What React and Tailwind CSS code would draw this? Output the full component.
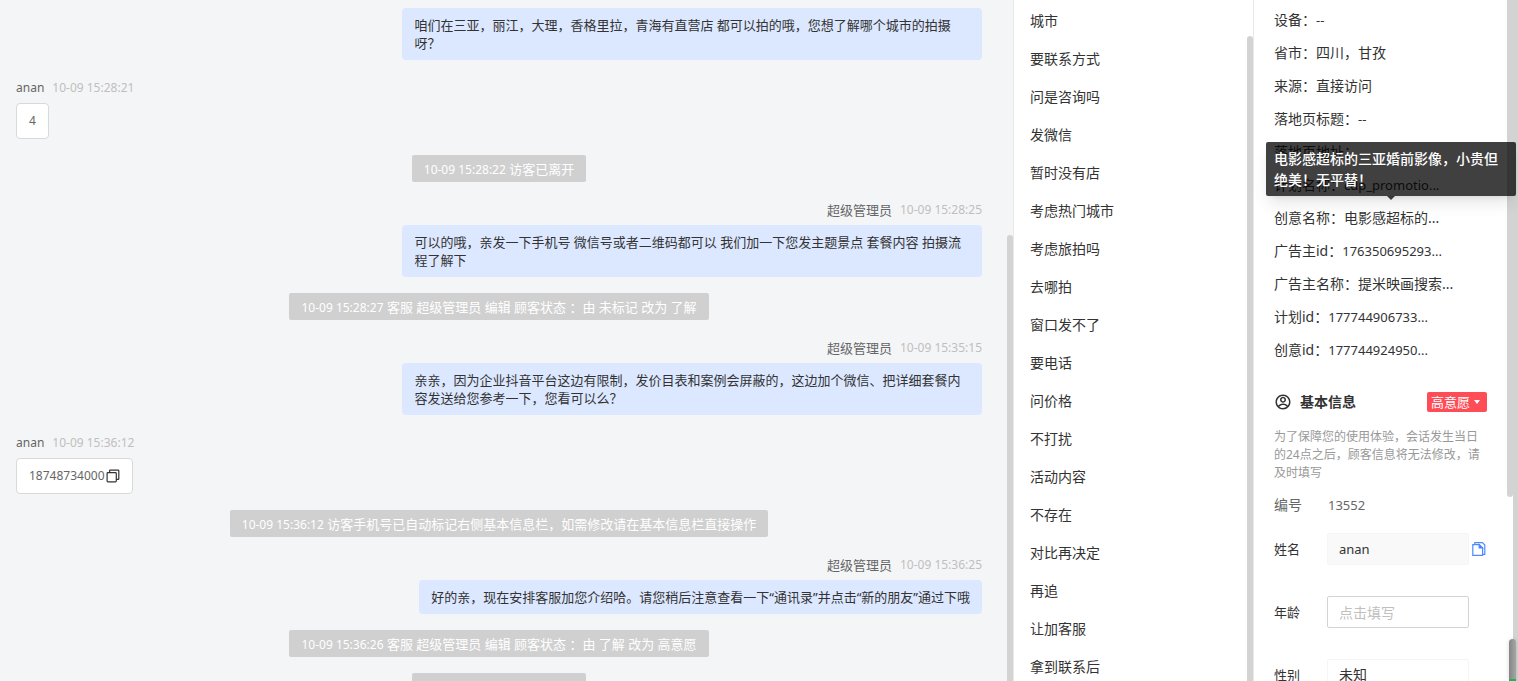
import React from 'react';
import { RiAccountCircleLine } from 'react-icons/ri';

const messages = [
  { type: 'agent', text: '咱们在三亚，丽江，大理，香格里拉，青海有直营店 都可以拍的哦，您想了解哪个城市的拍摄呀？' },
  { type: 'visitor', name: 'anan', time: '10-09 15:28:21', text: '4' },
  { type: 'notice', time: '10-09 15:28:22', text: '访客已离开' },
  { type: 'agent', name: '超级管理员', time: '10-09 15:28:25', text: '可以的哦，亲发一下手机号 微信号或者二维码都可以 我们加一下您发主题景点 套餐内容 拍摄流程了解下' },
  { type: 'notice', time: '10-09 15:28:27', text: '客服 超级管理员 编辑 顾客状态 ：由 未标记 改为 了解' },
  { type: 'agent', name: '超级管理员', time: '10-09 15:35:15', text: '亲亲，因为企业抖音平台这边有限制，发价目表和案例会屏蔽的，这边加个微信、把详细套餐内容发送给您参考一下，您看可以么？' },
  { type: 'visitor', name: 'anan', time: '10-09 15:36:12', text: '18748734000', copy: true },
  { type: 'notice', time: '10-09 15:36:12', text: '访客手机号已自动标记右侧基本信息栏，如需修改请在基本信息栏直接操作' },
  { type: 'agent', name: '超级管理员', time: '10-09 15:36:25', text: '好的亲，现在安排客服加您介绍哈。请您稍后注意查看一下“通讯录”并点击“新的朋友”通过下哦' },
  { type: 'notice', time: '10-09 15:36:26', text: '客服 超级管理员 编辑 顾客状态 ：由 了解 改为 高意愿' },
  { type: 'notice', time: '10-09 15:36:40', text: '访客已离开' },
];

const quickReplies = [
  '城市', '要联系方式', '问是咨询吗', '发微信', '暂时没有店', '考虑热门城市',
  '考虑旅拍吗', '去哪拍', '窗口发不了', '要电话', '问价格', '不打扰',
  '活动内容', '不存在', '对比再决定', '再追', '让加客服', '拿到联系后',
];

const details = [
  { label: '设备', value: '--' },
  { label: '省市', value: '四川，甘孜', cjk: true },
  { label: '来源', value: '直接访问', cjk: true },
  { label: '落地页标题', value: '--' },
  { label: '落地页地址', value: '' },
  { label: '计划名称', value: 'cdp_promotio...' },
  { label: '创意名称', value: '电影感超标的...', cjk: true, tip: '电影感超标的三亚婚前影像，小贵但绝美！无平替！' },
  { label: '广告主id', value: '176350695293...' },
  { label: '广告主名称', value: '提米映画搜索...', cjk: true },
  { label: '计划id', value: '177744906733...' },
  { label: '创意id', value: '177744924950...' },
];

const CopyIcon = () => (
  <svg className="h-[14px] w-[14px]" viewBox="0 0 14 14" fill="none" stroke="#333" strokeWidth="1.2">
    <rect x="1.1" y="3.6" width="9.2" height="9.2" rx="0.8" />
    <path d="M3.6 3.6V1.8a.6.6 0 0 1 .6-.6h8a.6.6 0 0 1 .6.6v8a.6.6 0 0 1-.6.6h-1.9" />
  </svg>
);

const FileCopyIcon = () => (
  <svg className="h-[14px] w-[14px]" viewBox="0 0 14 14" fill="none" stroke="#4d8bff" strokeWidth="1.2">
    <path d="M.8 2.6h6.4l3.4 3.4v7.4H.8z" />
    <path d="M2.8 2.6V.7h7.6l2.4 2.4v9.2h-2.2" />
    <path d="M7.2 2.6v3.4h3.4z" fill="#2f6bff" />
  </svg>
);

const Message = ({ msg }) => {
  if (msg.type === 'notice') {
    return (
      <div className="self-center rounded-xs bg-[#d0d0d0] px-3 pt-[5px] pb-[3px] leading-[19px] text-white">
        <time className="text-xs leading-[19px]">{msg.time}</time> {msg.text}
      </div>
    );
  }

  const isAgent = msg.type === 'agent';
  return (
    <div className={isAgent ? 'flex flex-col items-end' : 'flex flex-col items-start'}>
      {msg.name && (
        <div className="mb-[3px] flex items-center gap-2 leading-6 text-[#666]">
          <span className={isAgent ? 'leading-[22px]' : 'text-xs leading-6'}>{msg.name}</span>
          <time className="text-xs leading-6 text-[#bfbfbf]">{msg.time}</time>
        </div>
      )}
      {isAgent ? (
        <p className="max-w-[60%] rounded bg-[#dce8ff] px-3 py-2 leading-[18px] text-[#333]">{msg.text}</p>
      ) : (
        <div className="flex items-center rounded border border-[#d9d9d9] bg-white px-3 py-2 text-xs leading-[18px] text-[#666]">
          {msg.text}
          {msg.copy && (
            <button type="button" aria-label="复制" className="ml-px">
              <CopyIcon />
            </button>
          )}
        </div>
      )}
    </div>
  );
};

const Detail = ({ item }) => (
  <li className="relative h-[33px] leading-[33px]">
    {item.label}：<span className={item.cjk ? '' : 'text-[13px]'}>{item.value}</span>
    {item.tip && (
      <div role="tooltip" className="absolute bottom-full -left-2 z-10 mb-[5px] w-[250px] rounded-xs bg-black/75 px-2 py-[6px] leading-[21px] font-medium text-white shadow-lg">
        {item.tip}
        <span className="absolute top-full left-1/2 -translate-x-1/2 border-x-4 border-t-4 border-x-transparent border-t-black/75"></span>
      </div>
    )}
  </li>
);

const App = () => {
  return (
    <div className="flex h-screen overflow-hidden bg-white font-['Noto_Sans','Noto_Sans_CJK_SC',sans-serif] text-sm text-[#333]">
      <main className="relative min-w-0 flex-1 overflow-hidden bg-[#f4f5f7]">
        <div className="flex flex-col gap-4 py-2 pr-[31px] pl-4 text-[13px]">
          {messages.map((msg, index) => (
            <Message key={index} msg={msg} />
          ))}
        </div>
        <div className="absolute top-[235px] right-0 bottom-0 w-[6px] rounded-t-full bg-[#d3d3d3]"></div>
      </main>

      <nav className="relative w-[240px] shrink-0 overflow-hidden border-l border-[#e8e8e8] pt-[2px]">
        <ul>
          {quickReplies.map((reply) => (
            <li key={reply}>
              <button type="button" className="block h-[38px] w-full px-4 text-left leading-[38px]">
                {reply}
              </button>
            </li>
          ))}
        </ul>
        <div className="absolute top-9 right-0 bottom-0 w-[6px] rounded-t-full bg-[#d3d3d3]"></div>
      </nav>

      <aside className="relative w-[265px] shrink-0 overflow-hidden border-l border-[#e8e8e8] pt-[3px] pr-[31px] pl-5">
        <ul>
          {details.map((item) => (
            <Detail key={item.label} item={item} />
          ))}
        </ul>

        <div className="mt-[26px] flex h-5 items-center">
          <RiAccountCircleLine className="h-[18px] w-[18px]" />
          <h2 className="ml-2 font-bold">基本信息</h2>
          <button type="button" className="ml-auto flex h-5 items-center gap-1 rounded-xs bg-[#ff4d57] px-1 text-[13px] leading-5 text-white">
            高意愿
            <span className="mr-[3px] border-x-[3px] border-t-4 border-x-transparent border-t-white"></span>
          </button>
        </div>

        <p className="mt-4 text-xs leading-[18px] text-[#999]">
          为了保障您的使用体验，会话发生当日的24点之后，顾客信息将无法修改，请及时填写
        </p>

        <div className="mt-3 flex leading-[22px] text-[#666]">
          <span className="w-[54px]">编号</span>
          <span className="text-[13px] leading-[22px]">13552</span>
        </div>

        <form className="mt-[17px] flex flex-col gap-[31px] text-[13px]">
          <div className="flex h-8 items-center">
            <label htmlFor="name" className="w-[53px]">姓名</label>
            <input id="name" defaultValue="anan" className="h-8 w-[142px] rounded-xs border border-[#f5f5f5] bg-[#f9f9f9] px-[11px]" />
            <button type="button" aria-label="复制姓名" className="ml-[3px]">
              <FileCopyIcon />
            </button>
          </div>
          <div className="flex h-8 items-center">
            <label htmlFor="age" className="w-[53px]">年龄</label>
            <input id="age" placeholder="点击填写" className="h-8 w-[142px] rounded-xs border border-[#d3d3d3] px-[11px] text-sm placeholder:text-[#bfbfbf]" />
          </div>
          <div className="flex h-8 items-center">
            <label htmlFor="gender" className="w-[53px]">性别</label>
            <select id="gender" className="h-8 w-[142px] appearance-none rounded-xs border border-[#f5f5f5] px-[11px] text-sm">
              <option>未知</option>
            </select>
          </div>
        </form>

        <div className="absolute top-0 right-[5px] h-[497px] w-[6px] rounded-b-full bg-[#d3d3d3]"></div>
        <div className="absolute inset-y-0 right-0 w-[5px] bg-[#d3d3d3]"></div>
        <div className="absolute right-[2px] bottom-0 h-[42px] w-[7px] rounded-t-full border-b-2 border-[#1fb455] bg-linear-to-r from-[#858585] to-[#a6a6a6] shadow-[0_0_4px_rgba(0,0,0,0.15)]"></div>
      </aside>
    </div>
  );
};

export default App;
